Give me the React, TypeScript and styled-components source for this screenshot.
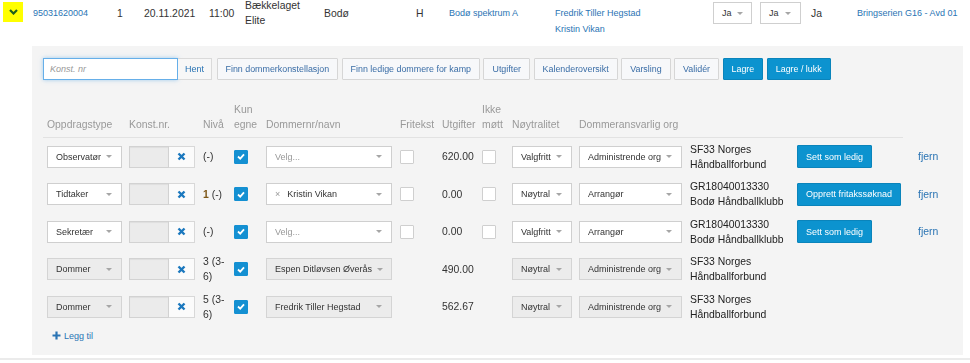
import * as React from 'react';
import styled, { createGlobalStyle } from 'styled-components';

type Assignment = {
  type: string;
  level: React.ReactNode;
  referee?: string;
  token?: string;
  locked?: boolean;
  cost: string;
  neutrality: string;
  org: string;
  orgName: string;
  action?: string;
};

const rows: Assignment[] = [
  {
    type: 'Observatør',
    level: '(-)',
    cost: '620.00',
    neutrality: 'Valgfritt',
    org: 'Administrende org',
    orgName: 'SF33 Norges Håndballforbund',
    action: 'Sett som ledig',
  },
  {
    type: 'Tidtaker',
    level: '1 (-)',
    token: 'Kristin Vikan',
    cost: '0.00',
    neutrality: 'Nøytral',
    org: 'Arrangør',
    orgName: 'GR18040013330 Bodø Håndballklubb',
    action: 'Opprett fritakssøknad',
  },
  {
    type: 'Sekretær',
    level: '(-)',
    cost: '0.00',
    neutrality: 'Valgfritt',
    org: 'Arrangør',
    orgName: 'GR18040013330 Bodø Håndballklubb',
    action: 'Sett som ledig',
  },
  {
    type: 'Dommer',
    level: '3 (3-6)',
    referee: 'Espen Ditløvsen Øverås',
    locked: true,
    cost: '490.00',
    neutrality: 'Nøytral',
    org: 'Administrende org',
    orgName: 'SF33 Norges Håndballforbund',
  },
  {
    type: 'Dommer',
    level: '5 (3-6)',
    referee: 'Fredrik Tiller Hegstad',
    locked: true,
    cost: '562.67',
    neutrality: 'Nøytral',
    org: 'Administrende org',
    orgName: 'SF33 Norges Håndballforbund',
  },
];

const tools = [
  'Finn dommerkonstellasjon',
  'Finn ledige dommere for kamp',
  'Utgifter',
  'Kalenderoversikt',
  'Varsling',
  'Validér',
];

const link = '#2a74b4';
const cols = '82px 74px 31px 32px 134px 42px 40px 30px 67px 111px 107px 121px 1fr';

const GlobalStyle = createGlobalStyle`
  body {
    margin: 0;
    background: #fff;
    color: #333;
    font-family: "Liberation Sans", Arial, sans-serif;
    font-size: 10.4px;
    overflow: hidden;
  }
`;

const App: React.FC = () => {
  return (
    <>
      <GlobalStyle />
      <Page>
        <MatchRow>
          <Toggle>
            <svg width='9' height='6' viewBox='0 0 9 6'>
              <polyline points='1,1 4.5,4.5 8,1' fill='none' stroke='#1d5f1d' strokeWidth='2.2' />
            </svg>
          </Toggle>
          <LinkText>95031620004</LinkText>
          <span>1</span>
          <span>20.11.2021</span>
          <span>11:00</span>
          <Stack>
            <span>Bækkelaget</span>
            <span>Elite</span>
          </Stack>
          <span>Bodø</span>
          <span>H</span>
          <LinkText>Bodø spektrum A</LinkText>
          <LinkStack>
            <span>Fredrik Tiller Hegstad</span>
            <span>Kristin Vikan</span>
          </LinkStack>
          <Select $w={39}>
            Ja <Caret />
          </Select>
          <Select $w={41}>
            Ja <Caret />
          </Select>
          <span>Ja</span>
          <LinkText>Bringserien G16 - Avd 01</LinkText>
        </MatchRow>

        <Panel>
          <Toolbar>
            <InputGroup>
              <SearchInput placeholder='Konst. nr' autoFocus />
              <AddonButton>Hent</AddonButton>
            </InputGroup>
            {tools.map((t) => (
              <ToolButton key={t}>{t}</ToolButton>
            ))}
            <ToolButton $primary>Lagre</ToolButton>
            <ToolButton $primary>Lagre / lukk</ToolButton>
          </Toolbar>

          <Table>
            <HeadRow>
              <HeadCell>Oppdragstype</HeadCell>
              <HeadCell>Konst.nr.</HeadCell>
              <HeadCell>Nivå</HeadCell>
              <HeadCell>Kun egne</HeadCell>
              <HeadCell>Dommernr/navn</HeadCell>
              <HeadCell>Fritekst</HeadCell>
              <HeadCell>Utgifter</HeadCell>
              <HeadCell>Ikke møtt</HeadCell>
              <HeadCell>Nøytralitet</HeadCell>
              <HeadCell>Dommeransvarlig org</HeadCell>
              <HeadCell />
              <HeadCell />
              <HeadCell />
            </HeadRow>

            {rows.map((r, i) => (
              <Row key={i}>
                <Cell>
                  <Select $w={75} $disabled={r.locked}>
                    {r.type} <Caret />
                  </Select>
                </Cell>
                <Cell>
                  <KonstGroup>
                    <KonstInput />
                    <KonstClear>
                      <svg width='9' height='9' viewBox='0 0 9 9'>
                        <path d='M1.5 1.5 L7.5 7.5 M7.5 1.5 L1.5 7.5' stroke='#1b78be' strokeWidth='2.4' />
                      </svg>
                    </KonstClear>
                  </KonstGroup>
                </Cell>
                <Cell>
                  <Level>
                    {r.level === '1 (-)' ? (
                      <>
                        <LevelNum>1</LevelNum> (-)
                      </>
                    ) : (
                      r.level
                    )}
                  </Level>
                </Cell>
                <Cell>
                  <Check $checked>
                    <svg width='8' height='7' viewBox='0 0 8 7'>
                      <polyline points='1,3.5 3.2,5.6 7,1.4' fill='none' stroke='#fff' strokeWidth='1.8' />
                    </svg>
                  </Check>
                </Cell>
                <Cell>
                  <Select $w={126} $disabled={r.locked}>
                    {r.referee ? (
                      <span>{r.referee}</span>
                    ) : r.token ? (
                      <Token>
                        <TokenX>×</TokenX>
                        {r.token}
                      </Token>
                    ) : (
                      <Placeholder>Velg...</Placeholder>
                    )}
                    <Caret />
                  </Select>
                </Cell>
                <Cell>{!r.locked && <Check />}</Cell>
                <Cell>{r.cost}</Cell>
                <Cell>{!r.locked && <Check />}</Cell>
                <Cell>
                  <Select $w={60} $disabled={r.locked}>
                    {r.neutrality} <Caret />
                  </Select>
                </Cell>
                <Cell>
                  <Select $w={103} $disabled={r.locked}>
                    {r.org} <Caret />
                  </Select>
                </Cell>
                <Cell>
                  <OrgName>{r.orgName}</OrgName>
                </Cell>
                <Cell>{r.action && <ActionButton>{r.action}</ActionButton>}</Cell>
                <Cell>{r.action && <RemoveLink>fjern</RemoveLink>}</Cell>
              </Row>
            ))}
          </Table>

          <AddLink>
            <svg width='9' height='9' viewBox='0 0 9 9'>
              <path d='M4.5 0.5 V8.5 M0.5 4.5 H8.5' stroke={link} strokeWidth='2.2' />
            </svg>
            Legg til
          </AddLink>
        </Panel>
        <Divider />
      </Page>
    </>
  );
};

const Page = styled.div`
  width: 970px;
  height: 363px;
  overflow: hidden;
`;

const MatchRow = styled.div`
  display: grid;
  grid-template-columns: 30px 84px 27px 65px 36px 79px 92px 33px 106px 158px 47px 51px 46px 1fr;
  align-items: center;
  height: 64px;
  margin-top: -19px;
  padding-left: 3px;
  font-size: 10.4px;
  white-space: nowrap;
`;

const Toggle = styled.div`
  width: 20px;
  height: 20px;
  margin-top: -3px;
  background: #ffff00;
  display: flex;
  align-items: center;
  justify-content: center;
`;

const LinkText = styled.span`
  color: ${link};
  font-size: 9px;
`;

const Stack = styled.div`
  display: flex;
  flex-direction: column;
  line-height: 15px;
`;

const LinkStack = styled.div`
  display: flex;
  flex-direction: column;
  padding-top: 16px;
  line-height: 16px;
  color: ${link};
  font-size: 9px;
`;

const Select = styled.div<{ $w: number; $disabled?: boolean }>`
  box-sizing: border-box;
  width: ${({ $w }) => $w}px;
  height: 22px;
  padding: 0 9px 0 8px;
  display: flex;
  align-items: center;
  justify-content: space-between;
  gap: 5px;
  border: 1px solid ${({ $disabled }) => ($disabled ? '#d4d4d4' : '#cfcfcf')};
  background: ${({ $disabled }) => ($disabled ? '#ececec' : '#fff')};
  color: #333;
  font-size: 9px;
  white-space: nowrap;
`;

const Caret = styled.i`
  flex-shrink: 0;
  width: 0;
  height: 0;
  border-left: 3px solid transparent;
  border-right: 3px solid transparent;
  border-top: 3px solid #a6a6a6;
`;

const Placeholder = styled.span`
  color: #999;
`;

const Token = styled.span`
  display: flex;
  align-items: center;
`;

const TokenX = styled.span`
  color: #999;
  font-size: 9px;
  margin-right: 7px;
`;

const Panel = styled.section`
  box-sizing: border-box;
  width: 931px;
  height: 309px;
  margin: 1px 0 0 32px;
  padding: 12px 11px 0;
  background: #f4f4f4;
`;

const Toolbar = styled.div`
  display: flex;
  align-items: center;
  gap: 3.5px;
`;

const InputGroup = styled.div`
  display: flex;
  margin-right: 1px;
`;

const SearchInput = styled.input`
  box-sizing: border-box;
  width: 135px;
  height: 22px;
  padding: 0 6px;
  border: 1px solid #66afe9;
  outline: none;
  box-shadow: 0 0 4px rgba(102, 175, 233, 0.6);
  font-family: inherit;
  font-size: 9px;
  &::placeholder {
    color: #999;
    font-style: italic;
  }
`;

const AddonButton = styled.button`
  box-sizing: border-box;
  height: 22px;
  padding: 0 7px;
  border: 1px solid #dadada;
  border-left: none;
  background: #f7f7f7;
  color: ${link};
  font-family: inherit;
  font-size: 9px;
`;

const ToolButton = styled.button<{ $primary?: boolean }>`
  box-sizing: border-box;
  height: 22px;
  padding: 0 8px;
  border: 1px solid ${({ $primary }) => ($primary ? '#0a84bb' : '#d6d6d6')};
  border-radius: 1px;
  background: ${({ $primary }) => ($primary ? '#0c93cf' : '#f7f8fa')};
  color: ${({ $primary }) => ($primary ? '#fff' : '#3a6da6')};
  font-family: inherit;
  font-size: 8.9px;
`;

const Table = styled.div`
  margin-top: 22px;
`;

const HeadRow = styled.div`
  display: grid;
  grid-template-columns: ${cols};
  align-items: end;
  width: 860px;
  border-bottom: 1px solid #e2e2e2;
`;

const HeadCell = styled.div`
  padding: 0 0 5px 4px;
  line-height: 15px;
  color: #999;
  font-size: 10.4px;
`;

const Row = styled.div`
  display: grid;
  grid-template-columns: ${cols};
  align-items: center;
  height: 37.5px;
`;

const Cell = styled.div`
  padding-left: 4px;
  display: flex;
  align-items: center;
`;

const KonstGroup = styled.div`
  display: flex;
  height: 22px;
`;

const KonstInput = styled.div`
  box-sizing: border-box;
  width: 40px;
  border: 1px solid #d2d2d2;
  background: #ebebeb;
  box-shadow: inset 0 1px 1px rgba(0, 0, 0, 0.06);
`;

const KonstClear = styled.div`
  box-sizing: border-box;
  width: 26px;
  border: 1px solid #d8d8d8;
  border-left: none;
  background: #fbfbfb;
  display: flex;
  align-items: center;
  justify-content: center;
`;

const Level = styled.div`
  width: 26px;
  line-height: 15px;
`;

const LevelNum = styled.span`
  color: #7d5717;
  font-weight: bold;
`;

const Check = styled.span<{ $checked?: boolean }>`
  box-sizing: border-box;
  width: 14px;
  height: 14px;
  border-radius: 1px;
  border: 1px solid ${({ $checked }) => ($checked ? '#1490d2' : '#cfcfcf')};
  background: ${({ $checked }) => ($checked ? '#1490d2' : '#fff')};
  display: flex;
  align-items: center;
  justify-content: center;
`;

const OrgName = styled.div`
  line-height: 15px;
  color: #222;
`;

const ActionButton = styled.button`
  box-sizing: border-box;
  height: 23px;
  padding: 0 8px;
  border: 1px solid #0a84bb;
  border-radius: 1px;
  background: #0c93cf;
  color: #fff;
  font-family: inherit;
  font-size: 9px;
  white-space: nowrap;
`;

const RemoveLink = styled.span`
  color: ${link};
  font-size: 10.4px;
`;

const AddLink = styled.div`
  display: flex;
  align-items: center;
  gap: 3px;
  margin: 5px 0 0 9px;
  color: ${link};
  font-size: 9px;
`;

const Divider = styled.div`
  height: 2px;
  margin-top: 3px;
  background: #ebebeb;
`;

export default App;
